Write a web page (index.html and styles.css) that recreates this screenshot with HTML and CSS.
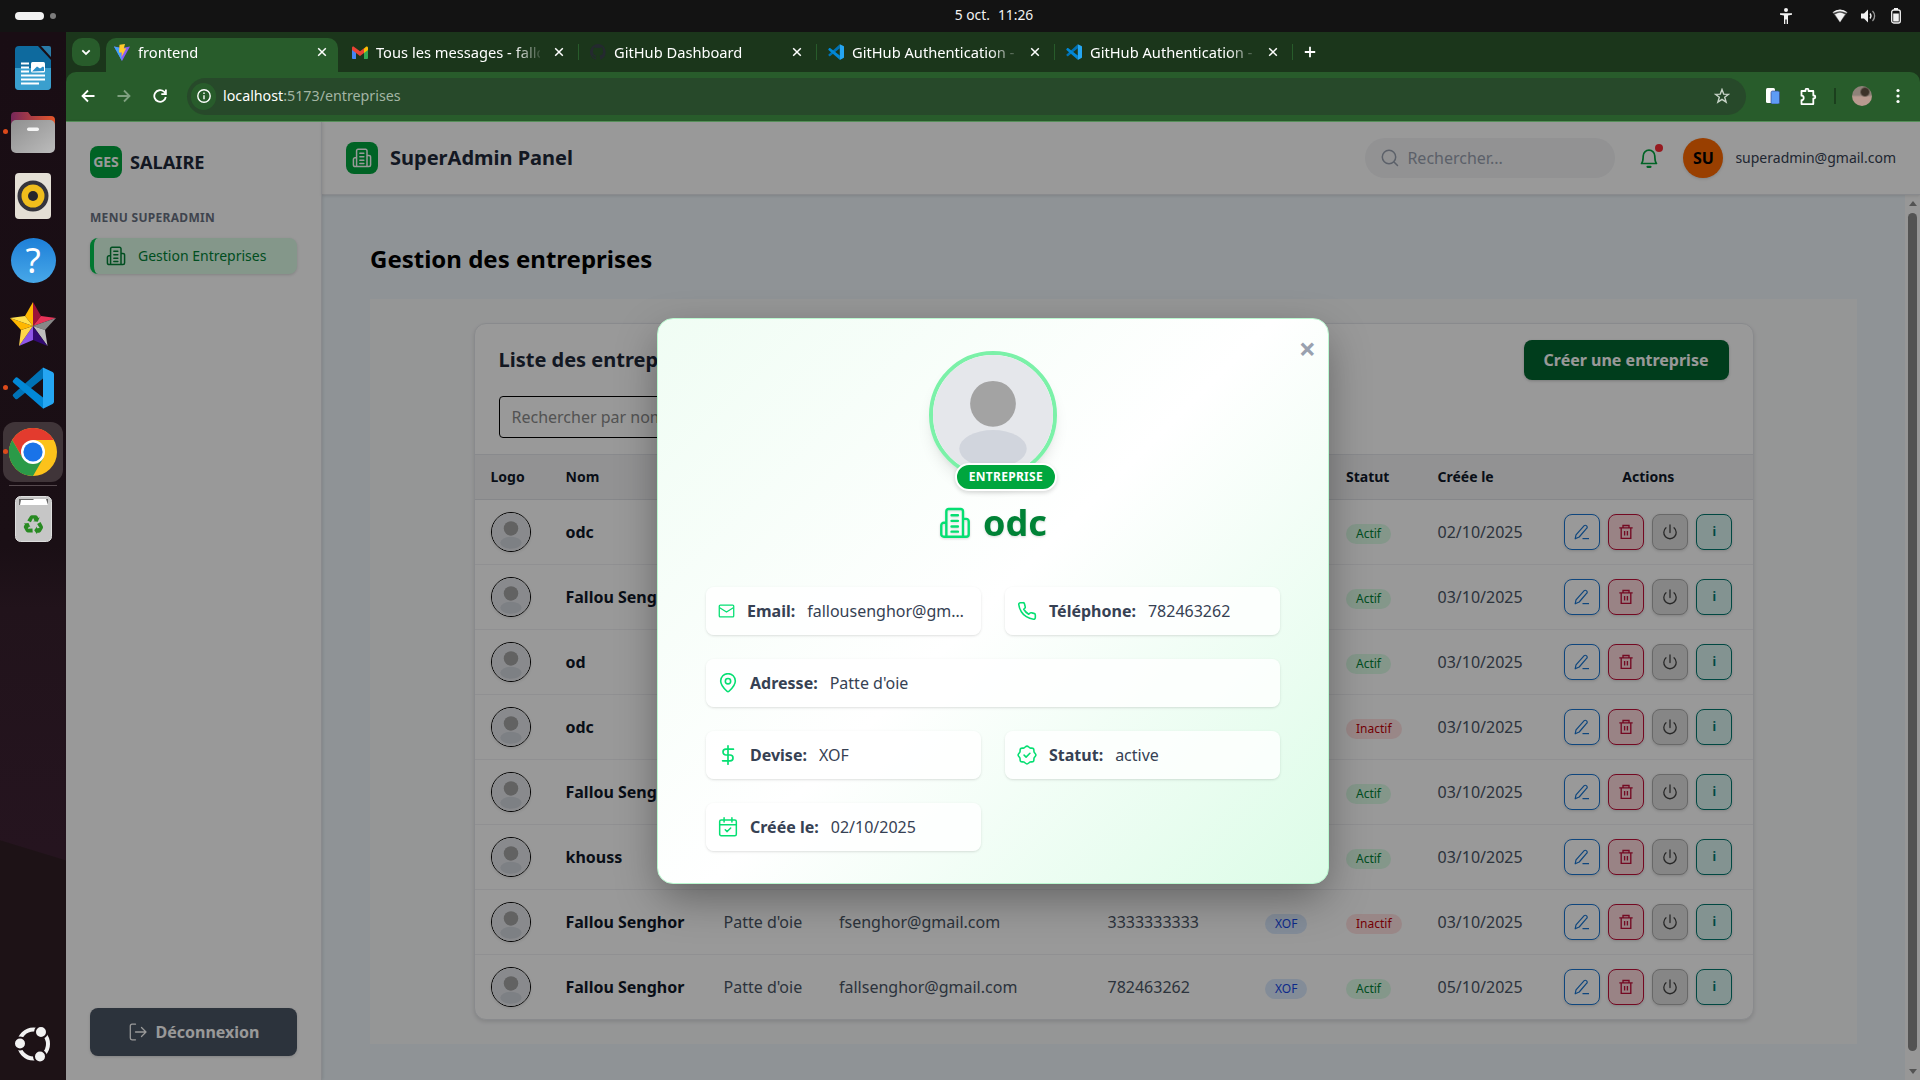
FILE: index.html
```html
<!DOCTYPE html>
<html lang="fr">
<head>
<meta charset="utf-8">
<title>frontend</title>
<link rel="stylesheet" href="styles.css">
</head>
<body>
<svg class="sprite" aria-hidden="true">
  <symbol id="building" viewBox="0 0 24 24" fill="none" stroke="currentColor" stroke-width="1.8" stroke-linecap="round" stroke-linejoin="round"><path d="M5.5 22.3V3.2A1.7 1.7 0 0 1 7.2 1.5h9.1A1.7 1.7 0 0 1 18 3.2v19.1M5.5 11.8H3.6a1.9 1.9 0 0 0-1.9 1.9v6.7a1.9 1.9 0 0 0 1.9 1.9h16.8a1.9 1.9 0 0 0 1.9-1.9v-9.6a1.9 1.9 0 0 0-1.9-1.9H18M9.4 6.2h4.8M9.4 10.4h4.8M9.4 14.6h4.8M9.4 18.5h4.8"/></symbol>
  <symbol id="close" viewBox="0 0 10 10" stroke="currentColor" stroke-width="1.5"><path d="M1.2 1.2l7.6 7.6M8.8 1.2L1.2 8.8"/></symbol>
  <symbol id="vscode" viewBox="0 0 42 42"><path d="M1.2 29.5a1.5 1.5 0 0 1 0-2.2L31 .4v11L5.4 32a1.9 1.9 0 0 1-2-.1z" fill="#0072b5"/><path d="M1.2 13.3L3.4 10.7a1.9 1.9 0 0 1 2-.1L31 30.5v11.1L1.2 15.500a1.500 1.500 0 0 1 0-2.200z" fill="#0288d6"/><path d="M31 .4L40.6 5A2.5 2.5 0 0 1 42 7.200v27.600a2.500 2.500 0 0 1-1.400 2.200L31 41.800z" fill="#25a6f2"/></symbol>
  <symbol id="person" viewBox="0 0 64 64"><rect width="64" height="64" fill="#e5e7eb"/><circle cx="32" cy="26" r="12.2" fill="#a3a3a3"/><ellipse cx="32" cy="50" rx="18" ry="10" fill="#d1d5dd"/></symbol>
  <symbol id="pencil" viewBox="0 0 16 16" fill="none" stroke="currentColor" stroke-width="1.2" stroke-linejoin="round"><path d="M1.200 14.800l.8-4L10.200 1.700a1.400 1.400 0 0 1 2.100 0l.5.5a1.400 1.400 0 0 1 0 2L5.200 13z"/><path d="M8.500 14.600h6.500"/></symbol>
  <symbol id="trash" viewBox="0 0 16 16" fill="none" stroke="currentColor" stroke-width="1.350"><path d="M1.300 3.900h13.400M5 3.700V1.500h6v2.200M3.200 4v10.300h9.600V4M6.600 7v4.600M9.400 7v4.600"/></symbol>
  <symbol id="power" viewBox="0 0 16 16" fill="none" stroke="currentColor" stroke-width="1.300" stroke-linecap="round"><path d="M8 1v7.500M4 3.800a6.200 6.200 0 1 0 8 0"/></symbol>
  <symbol id="mail" viewBox="0 0 20 20" fill="none" stroke="currentColor" stroke-width="1.500" stroke-linejoin="round"><rect x="1.500" y="3" width="17" height="14" rx="1.200"/><path d="M2 6.200l8 5 8-5"/></symbol>
  <symbol id="phone" viewBox="0 0 24 24" fill="none" stroke="currentColor" stroke-width="1.900" stroke-linecap="round" stroke-linejoin="round"><path d="M22 16.920v3a2 2 0 0 1-2.180 2 19.790 19.790 0 0 1-8.630-3.070 19.500 19.500 0 0 1-6-6 19.790 19.790 0 0 1-3.070-8.670A2 2 0 0 1 4.110 2h3a2 2 0 0 1 2 1.720 12.840 12.840 0 0 0 .7 2.810 2 2 0 0 1-.45 2.110L8.090 9.910a16 16 0 0 0 6 6l1.270-1.270a2 2 0 0 1 2.110-.45 12.840 12.840 0 0 0 2.810.7A2 2 0 0 1 22 16.920z"/></symbol>
  <symbol id="pin" viewBox="0 0 24 24" fill="none" stroke="currentColor" stroke-width="1.900"><path d="M20.800 9.600c0 5.400-4.600 9.500-7.600 12.300a1.800 1.800 0 0 1-2.400 0C7.800 19.100 3.200 15 3.200 9.600a8.800 8.800 0 0 1 17.600 0z"/><circle cx="12" cy="9.800" r="3.200"/></symbol>
  <symbol id="dollar" viewBox="0 0 24 24" fill="none" stroke="currentColor" stroke-width="2" stroke-linecap="round" stroke-linejoin="round"><path d="M12 1v22M18.500 5H9.500a3.500 3.500 0 0 0 0 7h5a3.500 3.500 0 0 1 0 7H5.500"/></symbol>
  <symbol id="badge" viewBox="0 0 24 24" fill="none" stroke="currentColor" stroke-width="1.900" stroke-linecap="round" stroke-linejoin="round"><path d="M8.500 12.200l2.400 2.300 4.600-4.600"/><path d="M12 1.300c1.500 0 2.300 1.700 3.700 2.200 1.400.5 3-.2 4 .8s.3 2.600.8 4c.5 1.400 2.200 2.200 2.200 3.700s-1.700 2.300-2.200 3.700c-.5 1.400.2 3-.8 4s-2.600.3-4 .8c-1.400.5-2.200 2.200-3.700 2.200s-2.300-1.700-3.700-2.200c-1.400-.5-3 .2-4-.8s-.3-2.600-.8-4C3 14.300 1.300 13.500 1.300 12S3 9.700 3.500 8.300c.5-1.400-.2-3 .8-4s2.600-.3 4-.8C9.700 3 10.500 1.300 12 1.300z"/></symbol>
  <symbol id="calendar" viewBox="0 0 24 24" fill="none" stroke="currentColor" stroke-width="1.800" stroke-linecap="round" stroke-linejoin="round"><rect x="2" y="3.500" width="20" height="19" rx="1.800"/><path d="M2 9.200h20M7.300 1v5M16.700 1v5M8.700 15.300l2.300 2.200 4.200-4.200"/></symbol>
</svg>

<div class="topbar">
  <div class="workspaces"><span class="ws-active"></span><span class="ws-dot"></span></div>
  <div class="clock"><span>5 oct.</span><span>11:26</span></div>
  <div class="indicators">
    <svg class="ind-a11y" width="12" height="16" viewBox="0 0 12 16" fill="#f2f2f2"><circle cx="6" cy="2" r="2"/><path d="M0 5.200h12v1.600L8 7.400V16H6.700v-4.500H5.300V16H4V7.400L0 6.800z"/></svg>
    <svg class="ind-wifi" width="16" height="14" viewBox="0 0 16 14"><path d="M.6 3.200Q8-1.800 15.400 3.200L8 13.500z" fill="#777"/><path d="M.4 3.600Q8-2.400 15.600 3.600M3 5.200Q8 2.200 13 5.200L8 13z" fill="#f2f2f2"/><path d="M2 4.800Q8 .8 14 4.800" fill="none" stroke="#444" stroke-width="1.200"/></svg>
    <svg class="ind-sound" width="15" height="14" viewBox="0 0 15 14"><path d="M0 4.500h3L7 .5v13l-4-4H0z" fill="#f2f2f2"/><path d="M9 4.500a4 4 0 0 1 0 5" stroke="#f2f2f2" stroke-width="1.300" fill="none"/><path d="M11.500 2a7 7 0 0 1 0 10" stroke="#999" stroke-width="1.300" fill="none"/></svg>
    <svg width="10" height="16" viewBox="0 0 10 16"><path d="M3 0h4v2H3z" fill="#f2f2f2"/><rect x=".7" y="2" width="8.600" height="13" rx="2" fill="none" stroke="#f2f2f2" stroke-width="1.300"/><path d="M2.200 5.500h5.600v8H2.200z" fill="#f2f2f2"/></svg>
  </div>
</div>

<div class="desktop">
  <nav class="dock">
    <div class="dock-item"><svg width="36" height="44" viewBox="0 0 36 44"><path d="M4 0h19l13 14v26a4 4 0 0 1-4 4H4a4 4 0 0 1-4-4V4a4 4 0 0 1 4-4z" fill="#0e6a9e"/><path d="M0 22h36v18a4 4 0 0 1-4 4H4a4 4 0 0 1-4-4z" fill="#3a9fce"/><path d="M26 0h8a2 2 0 0 1 2 2v9z" fill="#2a7ba8"/><path d="M6 16.500h8v2H6zm0 4h8v2H6zm0 4h8v2H6zm0 4h24v2H6zm0 4h24v2H6zm0 4h18v2H6z" fill="#fff"/><rect x="16" y="16" width="14" height="10.500" rx="1.500" fill="#fff"/><path d="M17 25.500l5-5 3 2 3-2 1 1v3.500z" fill="#2a8fc8"/></svg></div>
    <div class="dock-item running"><svg width="44" height="41" viewBox="0 0 44 41"><path d="M0 4a4 4 0 0 1 4-4h13l3 4h20a4 4 0 0 1 4 4v10H0z" fill="url(#fold)"/><rect y="8" width="44" height="33" rx="5" fill="url(#foldfront)"/><rect x="16" y="15.500" width="12" height="3.500" rx="1.700" fill="#f5f5f5"/><defs><linearGradient id="fold"><stop offset="0" stop-color="#77275a"/><stop offset="1" stop-color="#e4572b"/></linearGradient><linearGradient id="foldfront" x2="1" y2="1"><stop offset="0" stop-color="#8f8f8f"/><stop offset="1" stop-color="#bcbcbc"/></linearGradient></defs></svg></div>
    <div class="dock-item"><svg width="36" height="46" viewBox="0 0 36 46"><rect width="36" height="46" rx="4" fill="#e4dfd5"/><circle cx="18" cy="23" r="15.500" fill="#34343c"/><circle cx="18" cy="23" r="11.500" fill="#efbd1c"/><circle cx="18" cy="23" r="5" fill="#26262c"/></svg></div>
    <div class="dock-item"><div class="help-icon">?</div></div>
    <div class="dock-item"><svg width="46" height="44" viewBox="0 0 46 44"><path d="M23 0v24l-8-10z" fill="#ffb700"/><path d="M23 0v24l8-10z" fill="#9c1239"/><path d="M46 16L23 24l8-10z" fill="#e83358"/><path d="M46 16L23 24l12 4z" fill="#878787"/><path d="M37.500 44L35 28l-12-4z" fill="#bebebe"/><path d="M37.500 44L23 24v14z" fill="#320a72"/><path d="M9 44l14-20v14z" fill="#8e55e8"/><path d="M9 44l2-16 12-4z" fill="#ffd84a"/><path d="M0 16l11 12 12-4z" fill="#ffb700"/><path d="M0 16l15-2 8 10z" fill="#ffe04d"/></svg></div>
    <div class="dock-item running"><svg width="42" height="42"><use href="#vscode"/></svg></div>
    <div class="dock-item running"><div class="dock-tile"><svg width="48" height="48" viewBox="0 0 48 48"><circle cx="24" cy="24" r="24" fill="#fcc21b"/><path d="M3.200 12A24 24 0 0 1 44.800 12H24v12l-10.400 6z" fill="#e33b2e"/><path d="M3.200 12A24 24 0 0 0 24 48l10.400-18H13.600z" fill="#2b9a48"/><circle cx="24" cy="24" r="12" fill="#fff"/><circle cx="24" cy="24" r="9.600" fill="#1a73e8"/></svg></div></div>
    <div class="dock-sep"></div>
    <div class="dock-item"><svg width="37" height="46" viewBox="0 0 37 46"><rect x=".5" y=".5" width="36" height="45" rx="5" fill="#c6c6c6" stroke="#dedede"/><path d="M4 3h29v6H4z" fill="#666"/><path d="M6 4h12l1-1h12l2 6H5z" fill="#fff"/><g fill="#288a22"><path id="arr" d="M12.300 24.500l2.700-4.200q.7-1 1.900-1h3.600q1.200 0 1.900 1l1 1.700 1.300-.7-1.900 4.400-4.700-.5 1.400-.8-1.400-2.300-2.200 4.200z"/><use href="#arr" transform="rotate(120 18.500 29)"/><use href="#arr" transform="rotate(240 18.500 29)"/></g></svg></div>
    <div class="dock-end"><svg width="38" height="36" viewBox="0 0 38 36"><circle cx="19.500" cy="18" r="14.500" fill="none" stroke="#f2f2f2" stroke-width="4"/><g fill="#f2f2f2" stroke="#1d1116" stroke-width="2"><circle cx="6" cy="17.500" r="6"/><circle cx="27" cy="6" r="6"/><circle cx="26" cy="30.500" r="6"/></g></svg></div>
  </nav>

  <div class="browser">
    <div class="tabstrip">
      <button class="tab-search"><svg width="10" height="7" viewBox="0 0 10 7" fill="none" stroke="#fff" stroke-width="1.800"><path d="M1.300 1.300L5 5l3.700-3.700"/></svg></button>
      <div class="tab active"><svg width="16" height="17" viewBox="0 0 16 17"><path d="M0 2.500L8 17l8-14.500-8 1.500z" fill="#8a5cf6"/><path d="M0 2.500L8 17 6 4z" fill="#41a5fb"/><path d="M5.500.8L11 0 9.800 4.500l2.500-.3L7.500 13l.3-4.500H5z" fill="#ffcb2b"/></svg><span class="tab-title">frontend</span><svg class="x" width="10" height="10"><use href="#close"/></svg></div>
      <div class="tab second"><svg width="16" height="13" viewBox="0 0 16 13"><path d="M0 2v9.500A1.200 1.200 0 0 0 1.200 13H4V6z" fill="#4285f4"/><path d="M16 2v9.500a1.200 1.200 0 0 1-1.200 1.500H12V6z" fill="#34a853"/><path d="M12 2.500l2-1.700c1-.6 2 .2 2 1.200v2l-4 3z" fill="#fbbc04"/><path d="M0 2C0 .5 1.400.200 2.200.900L8 5.200 12 2.200v4.800l-4 3-4-3-4-3z" fill="#ea4335"/></svg><span class="tab-title">Tous les messages - fallo</span><svg class="x" width="10" height="10"><use href="#close"/></svg></div>
      <div class="tab"><svg width="16" height="16" viewBox="0 0 16 16"><path fill="#24292f" d="M8 0a8 8 0 0 0-2.500 15.600c.4.100.5-.2.500-.4v-1.500c-2.200.5-2.700-1-2.700-1-.4-.9-.9-1.200-.9-1.200-.7-.5.100-.5.100-.5.800.1 1.200.8 1.200.8.700 1.300 1.900.9 2.300.7.100-.5.300-.9.500-1.100-1.800-.2-3.600-.9-3.600-4 0-.9.300-1.600.8-2.100-.1-.2-.4-1 .1-2.100 0 0 .7-.2 2.200.8a7.500 7.500 0 0 1 4 0c1.500-1 2.200-.8 2.200-.8.400 1.100.200 1.900.1 2.100.5.600.8 1.300.8 2.100 0 3.100-1.900 3.700-3.700 3.900.3.300.6.800.6 1.500v2.200c0 .2.100.5.600.4A8 8 0 0 0 8 0z"/></svg><span class="tab-title">GitHub Dashboard</span><svg class="x" width="10" height="10"><use href="#close"/></svg></div>
      <div class="tab"><svg width="16" height="16"><use href="#vscode"/></svg><span class="tab-title">GitHub Authentication -</span><svg class="x" width="10" height="10"><use href="#close"/></svg></div>
      <div class="tab"><svg width="16" height="16"><use href="#vscode"/></svg><span class="tab-title">GitHub Authentication -</span><svg class="x" width="10" height="10"><use href="#close"/></svg></div>
      <svg class="newtab" width="12" height="12" viewBox="0 0 12 12" stroke="#fff" stroke-width="1.800"><path d="M6 .8v10.400M.8 6h10.400"/></svg>
    </div>
    <div class="toolbar">
      <div class="nav-buttons">
        <svg width="14" height="14" viewBox="0 0 14 14" fill="none" stroke="#fff" stroke-width="1.800"><path d="M13.500 7H2M7 1.500L1.500 7 7 12.500"/></svg>
        <svg width="14" height="14" viewBox="0 0 14 14" fill="none" stroke="#7fa080" stroke-width="1.800"><path d="M.5 7H12M7 1.500L12.500 7 7 12.500"/></svg>
        <svg width="14" height="14" viewBox="0 0 14 14" fill="none" stroke="#fff" stroke-width="1.800"><path d="M12.800 8A5.800 5.800 0 1 1 11 2.700l1.700 1.600M12.900.5v4.600H8.300"/></svg>
      </div>
      <div class="omnibox">
        <span class="site-info"><svg width="14" height="14" viewBox="0 0 14 14" fill="none" stroke="#fff" stroke-width="1.400"><circle cx="7" cy="7" r="6.200"/><path d="M7 6.200v4M7 3.500v1.400"/></svg></span>
        <span class="url"><b>localhost</b>:5173/entreprises</span>
        <svg class="star" width="16" height="16" viewBox="0 0 16 16" fill="none" stroke="#c8d4c8" stroke-width="1.400"><path d="M8 1.500l1.700 4.600 4.900.2-3.900 3 1.400 4.800L8 11.300l-4.100 2.800 1.400-4.800-3.900-3 4.900-.2z"/></svg>
      </div>
      <div class="extensions">
        <svg width="14" height="16" viewBox="0 0 14 16"><rect y="0" width="9" height="15" rx="1.500" fill="#fff"/><rect x="5" y="3" width="8.500" height="13" rx="1.500" fill="#5e9cf5" stroke="#3a4b8a" stroke-width=".7"/></svg>
        <svg class="puzzle" width="17" height="17" viewBox="0 0 17 17" fill="none" stroke="#fff" stroke-width="1.800" stroke-linejoin="round"><path d="M1.500 3h4V2.200a1.500 1.500 0 0 1 3 0V3h4.800v4.500h.5a1.500 1.500 0 0 1 0 3h-.5v5.600H1.500v-4a2 2 0 0 0 0-4.400z"/></svg>
        <i class="tool-sep"></i>
        <span class="profile"></span>
        <svg class="menu" width="4" height="16" viewBox="0 0 4 16" fill="#fff"><circle cx="2" cy="2.500" r="1.600"/><circle cx="2" cy="8" r="1.600"/><circle cx="2" cy="13.500" r="1.600"/></svg>
      </div>
    </div>

    <div class="page">
      <aside class="sidebar">
        <div class="brand"><span class="brand-mark">GES</span><span class="brand-name">SALAIRE</span></div>
        <div class="menu-label">MENU SUPERADMIN</div>
        <a class="menu-item"><svg width="20" height="20"><use href="#building"/></svg>Gestion Entreprises</a>
        <button class="logout"><svg width="20" height="20" viewBox="0 0 20 20" fill="none" stroke="currentColor" stroke-width="1.300" stroke-linecap="round" stroke-linejoin="round"><path d="M7.500 2.200H4A1.700 1.700 0 0 0 2.300 3.900v12.200A1.700 1.700 0 0 0 4 17.800h3.500M7.500 10H18M13.500 5.500L18 10l-4.500 4.500"/></svg>Déconnexion</button>
      </aside>
      <div class="content">
        <header class="header">
          <span class="header-mark"><svg width="20" height="20"><use href="#building"/></svg></span>
          <span class="header-title">SuperAdmin Panel</span>
          <div class="search"><svg width="18" height="18" viewBox="0 0 18 18" fill="none" stroke="currentColor" stroke-width="1.500" stroke-linecap="round"><circle cx="8" cy="8" r="6.700"/><path d="M13 13l3.500 3.500"/></svg>Rechercher...</div>
          <div class="bell"><svg width="24" height="24" viewBox="0 0 24 24" fill="none" stroke="currentColor" stroke-width="1.700" stroke-linecap="round" stroke-linejoin="round"><path d="M4.500 17.500c1.700-1.700 1.500-3.500 1.700-7.500a5.800 5.800 0 0 1 11.600 0c.2 4 0 5.800 1.700 7.500z"/><path d="M10.500 20.800h3" stroke-width="2.200"/></svg><i></i></div>
          <span class="avatar">SU</span>
          <span class="mail">superadmin@gmail.com</span>
        </header>
        <div class="scroller">
          <main class="main">
            <h1>Gestion des entreprises</h1>
            <div class="panel">
              <section class="card">
                <div class="card-head">
                  <div class="card-bar"><h2>Liste des entreprises</h2><button class="create">Créer une entreprise</button></div>
                  <div class="filter">Rechercher par nom...</div>
                </div>
                <div class="row head"><span>Logo</span><span>Nom</span><span>Adresse</span><span>Email</span><span>Téléphone</span><span>Devise</span><span>Statut</span><span>Créée le</span><span class="center">Actions</span></div>
                <div class="row"><span><svg class="logo"><use href="#person"/></svg></span><b>odc</b><span></span><span></span><span></span><span></span><span><i class="pill ok">Actif</i></span><span>02/10/2025</span><span class="actions"><button class="edit"><svg><use href="#pencil"/></svg></button><button class="del"><svg><use href="#trash"/></svg></button><button class="off"><svg><use href="#power"/></svg></button><button class="info">i</button></span></div>
                <div class="row"><span><svg class="logo"><use href="#person"/></svg></span><b>Fallou Senghor</b><span></span><span></span><span></span><span></span><span><i class="pill ok">Actif</i></span><span>03/10/2025</span><span class="actions"><button class="edit"><svg><use href="#pencil"/></svg></button><button class="del"><svg><use href="#trash"/></svg></button><button class="off"><svg><use href="#power"/></svg></button><button class="info">i</button></span></div>
                <div class="row"><span><svg class="logo"><use href="#person"/></svg></span><b>od</b><span></span><span></span><span></span><span></span><span><i class="pill ok">Actif</i></span><span>03/10/2025</span><span class="actions"><button class="edit"><svg><use href="#pencil"/></svg></button><button class="del"><svg><use href="#trash"/></svg></button><button class="off"><svg><use href="#power"/></svg></button><button class="info">i</button></span></div>
                <div class="row"><span><svg class="logo"><use href="#person"/></svg></span><b>odc</b><span></span><span></span><span></span><span></span><span><i class="pill ko">Inactif</i></span><span>03/10/2025</span><span class="actions"><button class="edit"><svg><use href="#pencil"/></svg></button><button class="del"><svg><use href="#trash"/></svg></button><button class="off"><svg><use href="#power"/></svg></button><button class="info">i</button></span></div>
                <div class="row"><span><svg class="logo"><use href="#person"/></svg></span><b>Fallou Senghor</b><span></span><span></span><span></span><span></span><span><i class="pill ok">Actif</i></span><span>03/10/2025</span><span class="actions"><button class="edit"><svg><use href="#pencil"/></svg></button><button class="del"><svg><use href="#trash"/></svg></button><button class="off"><svg><use href="#power"/></svg></button><button class="info">i</button></span></div>
                <div class="row"><span><svg class="logo"><use href="#person"/></svg></span><b>khouss</b><span></span><span></span><span></span><span></span><span><i class="pill ok">Actif</i></span><span>03/10/2025</span><span class="actions"><button class="edit"><svg><use href="#pencil"/></svg></button><button class="del"><svg><use href="#trash"/></svg></button><button class="off"><svg><use href="#power"/></svg></button><button class="info">i</button></span></div>
                <div class="row"><span><svg class="logo"><use href="#person"/></svg></span><b>Fallou Senghor</b><span>Patte d'oie</span><span>fsenghor@gmail.com</span><span>3333333333</span><span><i class="pill cur">XOF</i></span><span><i class="pill ko">Inactif</i></span><span>03/10/2025</span><span class="actions"><button class="edit"><svg><use href="#pencil"/></svg></button><button class="del"><svg><use href="#trash"/></svg></button><button class="off"><svg><use href="#power"/></svg></button><button class="info">i</button></span></div>
                <div class="row"><span><svg class="logo"><use href="#person"/></svg></span><b>Fallou Senghor</b><span>Patte d'oie</span><span>fallsenghor@gmail.com</span><span>782463262</span><span><i class="pill cur">XOF</i></span><span><i class="pill ok">Actif</i></span><span>05/10/2025</span><span class="actions"><button class="edit"><svg><use href="#pencil"/></svg></button><button class="del"><svg><use href="#trash"/></svg></button><button class="off"><svg><use href="#power"/></svg></button><button class="info">i</button></span></div>
              </section>
            </div>
          </main>
          <div class="scrollbar"><i class="up"></i><i class="thumb"></i><i class="down"></i></div>
        </div>
      </div>

      <div class="overlay">
        <div class="modal">
          <button class="modal-close">×</button>
          <div class="portrait"><svg><use href="#person"/></svg><span class="tag">ENTREPRISE</span></div>
          <div class="modal-title"><svg width="32" height="32"><use href="#building"/></svg><span>odc</span></div>
          <div class="fields">
            <div class="field"><svg class="narrow"><use href="#mail"/></svg><b>Email:</b><span>fallousenghor@gmail.com</span></div>
            <div class="field"><svg><use href="#phone"/></svg><b>Téléphone:</b><span>782463262</span></div>
            <div class="field wide"><svg><use href="#pin"/></svg><b>Adresse:</b><span>Patte d'oie</span></div>
            <div class="field"><svg><use href="#dollar"/></svg><b>Devise:</b><span>XOF</span></div>
            <div class="field"><svg><use href="#badge"/></svg><b>Statut:</b><span>active</span></div>
            <div class="field"><svg><use href="#calendar"/></svg><b>Créée le:</b><span>02/10/2025</span></div>
          </div>
        </div>
      </div>
    </div>
  </div>
</div>
</body>
</html>
```
FILE: styles.css
```css
* { box-sizing: border-box; }
body { margin: 0; width: 1920px; height: 1080px; overflow: hidden; font: 16px/24px "Noto Sans", sans-serif; color: #101828; background: #131313; display: flex; flex-direction: column; }
button { font: inherit; border: 0; padding: 0; margin: 0; }
svg { flex: none; display: block; }
.sprite { position: absolute; width: 0; height: 0; }

/* system bar */
.topbar { height: 32px; flex: none; display: grid; grid-template-columns: 1fr auto 1fr; align-items: center; color: #f2f2f2; padding: 0 19px 0 15px; background: #131313; }
.workspaces { display: flex; align-items: center; gap: 6px; }
.ws-active { width: 29px; height: 8px; border-radius: 4px; background: #f2f2f2; }
.ws-dot { width: 6px; height: 6px; border-radius: 3px; background: #7d7d7d; }
.clock { display: flex; gap: 8px; font-size: 13.8px; line-height: 28px; margin-left: 72px; margin-bottom: 3px; }
.indicators { display: flex; align-items: center; justify-content: flex-end; }
.ind-a11y { margin-right: 40px; }
.ind-wifi { margin-right: 13px; }
.ind-sound { margin-right: 15px; }

/* dock */
.desktop { flex: 1; display: flex; min-height: 0; }
.dock { width: 66px; flex: none; display: flex; flex-direction: column; padding-top: 4px; background: linear-gradient(197deg, transparent 77.500%, #1d1216 77.600%), linear-gradient(#190d14 0, #1a0f15 49%, #21131b 55%, #25141f 78%); }
.dock-item { height: 64px; display: flex; align-items: center; justify-content: center; position: relative; }
.running::before { content: ""; position: absolute; left: 3px; top: 29px; width: 5px; height: 5px; border-radius: 50%; background: #dc4a1b; z-index: 1; }
.dock-tile { width: 60px; height: 60px; border-radius: 12px; background: #403539; display: flex; align-items: center; justify-content: center; }
.dock-sep { height: 1px; margin: 1px 9px 1px; background: #55494e; }
.dock-end { margin-top: auto; height: 72px; display: flex; align-items: center; justify-content: center; }
.help-icon { width: 45px; height: 45px; border-radius: 50%; background: linear-gradient(#1d7fd8, #48a8e8); color: #fff; font-size: 35px; line-height: 44px; text-align: center; }

/* browser chrome */
.browser { flex: 1; display: flex; flex-direction: column; min-width: 0; background: #1b361b; color: #fff; }
.tabstrip { height: 40px; flex: none; display: flex; padding: 6px 0 0 6px; }
.tab-search { width: 28px; height: 28px; border-radius: 10px; background: #285c2b; display: flex; align-items: center; justify-content: center; margin-right: 6px; }
.tab { width: 238px; display: flex; align-items: center; gap: 8px; padding: 0 15px 6px 11px; font-size: 14.670px; line-height: 22px; background: linear-gradient(#285c2b, #285c2b) right 6px/1.500px 16px no-repeat; }
.tab.active { width: 232px; padding: 0 11px 6px 8px; border-radius: 10px 10px 0 0; background: #285c2b; }
.tab.second { width: 241px; padding-left: 14px; }
.tab-title { flex: 1; white-space: nowrap; margin-right: 6px; width: 0; -webkit-mask: linear-gradient(90deg, #000 138px, transparent 168px); mask: linear-gradient(90deg, #000 138px, transparent 168px); }
.newtab { margin: 8px 0 0 11px; }
.toolbar { height: 50px; flex: none; display: flex; align-items: center; background: #285c2b; border-bottom: 1px solid #57925b; border-radius: 10px 10px 0 0; }
.nav-buttons { display: flex; gap: 22px; padding: 0 0 1px 15px; width: 121px; }
.omnibox { width: 1559px; height: 37px; border-radius: 19px; background: #27492a; display: flex; align-items: center; padding: 0 16px 0 4px; font-size: 14.250px; }
.site-info { width: 25px; height: 27px; border-radius: 13px; background: #285c2b; display: flex; align-items: center; justify-content: center; padding-bottom: 1px; }
.url { margin-left: 7px; flex: 1; color: #a3b5a4; padding-bottom: 2px; }
.url b { color: #fff; font-weight: 400; }
.star { margin-bottom: 1px; }
.extensions { display: flex; align-items: center; margin-left: 20px; padding-bottom: 1px; }
.puzzle { margin-left: 20px; }
.tool-sep { width: 2px; height: 16px; background: #1b3f1d; margin: 0 16px 0 17px; }
.profile { width: 20px; height: 20px; border-radius: 50%; background: radial-gradient(circle at 65% 30%, #3d3229 0 18%, transparent 28%), linear-gradient(#8f8279 45%, #b99a90 55%); }
.menu { margin-left: 24px; }

/* application */
.page { flex: 1; min-height: 0; display: flex; position: relative; background: #fff; color: #101828; }
.sidebar { width: 256px; flex: none; display: flex; flex-direction: column; padding: 24px; border-right: 1px solid #e5e7eb; box-shadow: 1px 0 3px rgba(0,0,0,.1); z-index: 1; }
.brand { display: flex; align-items: center; gap: 8px; height: 32px; }
.brand-mark { width: 32px; height: 32px; border-radius: 8px; background: #00a63e; color: #fff; font-weight: 700; font-size: 14px; line-height: 32px; text-align: center; }
.brand-name { font-weight: 700; font-size: 18.200px; color: #1e2939; }
.menu-label { margin-top: 32px; height: 16px; font-size: 12px; line-height: 16px; font-weight: 700; letter-spacing: .300px; color: #6a7282; }
.menu-item { margin-top: 12px; height: 36px; display: flex; align-items: center; gap: 12px; padding-left: 12px; border-left: 4px solid #00c950; border-radius: 8px; background: #dcfce7; color: #008236; font-size: 14px; box-shadow: 0 1px 3px rgba(0,0,0,.15); }
.logout { margin-top: auto; height: 48px; border-radius: 8px; background: #4a5565; color: #fff; font-weight: 700; display: flex; align-items: center; justify-content: center; gap: 8px; box-shadow: 0 1px 3px rgba(0,0,0,.15); }
.content { flex: 1; min-width: 0; display: flex; flex-direction: column; }
.header { height: 73px; flex: none; display: flex; align-items: center; padding: 0 24px; border-bottom: 1px solid #e5e7eb; box-shadow: 0 1px 3px rgba(0,0,0,.12); position: relative; }
.header-mark { width: 32px; height: 32px; border-radius: 8px; background: #00a63e; color: #fff; display: flex; align-items: center; justify-content: center; }
.header-title { margin-left: 12px; font-weight: 700; font-size: 20px; color: #1e2939; }
.search { margin-left: auto; width: 250px; height: 40px; border-radius: 20px; background: #f3f4f6; display: flex; align-items: center; gap: 8px; padding-left: 16px; color: #99a1af; }
.bell { margin: 0 22px; position: relative; color: #00a63e; }
.bell i { position: absolute; top: -2px; right: -2px; width: 8px; height: 8px; border-radius: 50%; background: #fb2c36; }
.avatar { width: 40px; height: 40px; border-radius: 50%; background: #ff6900; color: #000; font-weight: 700; line-height: 40px; text-align: center; box-shadow: 0 1px 3px rgba(0,0,0,.15); }
.mail { margin-left: 12px; font-size: 14px; color: #364153; }
.scroller { flex: 1; min-height: 0; display: flex; }
.main { flex: 1; min-width: 0; padding: 48px; background: #eef6fb; }
h1 { margin: 0 0 24px; font-size: 24px; line-height: 32px; font-weight: 700; color: #000; }
.panel { padding: 24px 0; background: #f9fafb; display: flex; justify-content: center; }
.card { width: 1280px; background: #fff; border: 1px solid #e5e7eb; border-radius: 12px; overflow: hidden; box-shadow: 0 2px 4px rgba(0,0,0,.12); }
.card-head { padding: 16px 24px; border-bottom: 1px solid #e5e7eb; }
.card-bar { height: 40px; display: flex; align-items: center; justify-content: space-between; }
h2 { margin: 0; font-size: 20px; line-height: 28px; font-weight: 700; color: #1e2939; }
.create { height: 40px; padding: 0 20px; border-radius: 8px; background: #016630; color: #fff; font-weight: 700; box-shadow: 0 1px 3px rgba(0,0,0,.2); }
.filter { margin-top: 16px; width: 320px; height: 42px; border: 1px solid #000; border-radius: 4px; padding: 8px 12px; color: #8a8a8a; }
.row { height: 65px; display: grid; grid-template-columns: 75px 158px 115.500px 268.500px 157.500px 81px 91.500px 122.500px 1fr; align-items: center; border-bottom: 1px solid #f0f1f3; color: #4a5565; }
.row > * { padding-left: 16px; white-space: nowrap; }
.row b { color: #101828; font-weight: 700; }
.row:last-child { height: 64px; border: 0; }
.row.head { height: 45px; background: #f3f4f6; border-bottom: 1px solid #e0e2e6; font-size: 14px; font-weight: 700; color: #101828; }
.row.head .center { padding: 0; text-align: center; }
.logo { width: 40px; height: 40px; border: 1px solid #000; border-radius: 50%; box-shadow: 0 1px 3px rgba(0,0,0,.1); }
.pill { display: block; width: max-content; margin-top: 4px; font-style: normal; font-size: 12px; line-height: 16px; padding: 2px 10px; border-radius: 10px; }
.ok { background: #dcfce7; color: #008236; }
.ko { background: #ffe2e2; color: #c10007; }
.cur { background: #dbeafe; color: #1447e6; }
.row .actions { padding: 0; display: flex; justify-content: center; gap: 8px; }
.actions button { width: 36px; height: 36px; border: 1px solid; border-radius: 8px; display: flex; align-items: center; justify-content: center; box-shadow: 0 1px 3px rgba(0,0,0,.15); }
.actions svg { width: 16px; height: 16px; }
.edit { background: #fff; color: #1976d2; }
.del { background: #ffdade; color: #c10f3a; }
.actions .off { background: #e0e0e0; color: #444; border-color: #aeaeae; }
.info { background: #daf5f2; color: #00786f; }
.actions .info { font-size: 12px; font-weight: 700; }
.scrollbar { width: 15px; background: #fcfcfc; display: flex; flex-direction: column; align-items: center; }
.scrollbar i { display: block; }
.up { margin-top: 6px; border: 4px solid transparent; border-top: 0; border-bottom: 5px solid #8b8b8b; }
.thumb { margin: 7px 0 auto; width: 9px; height: 838px; border-radius: 5px; background: #8b8b8b; }
.down { margin-bottom: 6px; border: 4px solid transparent; border-bottom: 0; border-top: 5px solid #8b8b8b; }

/* details dialog */
.overlay { position: absolute; inset: 0; z-index: 2; background: rgba(0,0,0,.4); display: flex; align-items: center; justify-content: center; }
.modal { width: 672px; height: 566px; position: relative; padding: 32px; border: 1px solid #b9f8cf; border-radius: 16px; background: linear-gradient(135deg, #f0fdf4, #fff 50%, #dcfce7); box-shadow: 0 16px 44px -4px rgba(0,0,0,.38); display: flex; flex-direction: column; align-items: center; }
.modal-close { position: absolute; top: 12px; right: 12px; background: none; color: #99a1af; font-size: 30px; line-height: 36px; font-weight: 700; }
.portrait { position: relative; width: 128px; height: 128px; border: 4px solid #7bf1a8; border-radius: 50%; box-shadow: 0 10px 15px -3px rgba(0,0,0,.1), 0 4px 6px -4px rgba(0,0,0,.1); }
.portrait svg { width: 120px; height: 120px; border-radius: 50%; }
.tag { position: absolute; right: -4px; bottom: -16px; height: 28px; border: 2px solid #fff; border-radius: 14px; background: #00a63e; color: #fff; font-size: 12px; font-weight: 700; line-height: 24px; letter-spacing: .3px; padding: 0 12px; box-shadow: 0 2px 4px rgba(0,0,0,.15); }
.modal-title { margin-top: 24px; height: 40px; display: flex; align-items: center; gap: 12px; font-size: 36px; line-height: 40px; font-weight: 700; color: #008236; }
.modal-title svg { color: #05df72; filter: drop-shadow(0 1px 1px rgba(0,0,0,.15)); }
.modal-title span { filter: drop-shadow(0 1px 1px rgba(0,0,0,.15)); }
.fields { margin-top: 44px; width: 574px; display: grid; grid-template-columns: 275px 275px; gap: 24px; }
.field { height: 48px; display: flex; align-items: center; gap: 12px; padding: 0 12px; border-radius: 8px; background: rgba(255,255,255,.8); color: #364153; box-shadow: 0 1px 3px rgba(0,0,0,.1), 0 1px 2px -1px rgba(0,0,0,.1); }
.field.wide { grid-column: span 2; }
.field svg { width: 20px; height: 20px; color: #05df72; }
.field svg.narrow { width: 17px; }
.field b { font-weight: 700; }
.field span { overflow: hidden; text-overflow: ellipsis; white-space: nowrap; }
```
